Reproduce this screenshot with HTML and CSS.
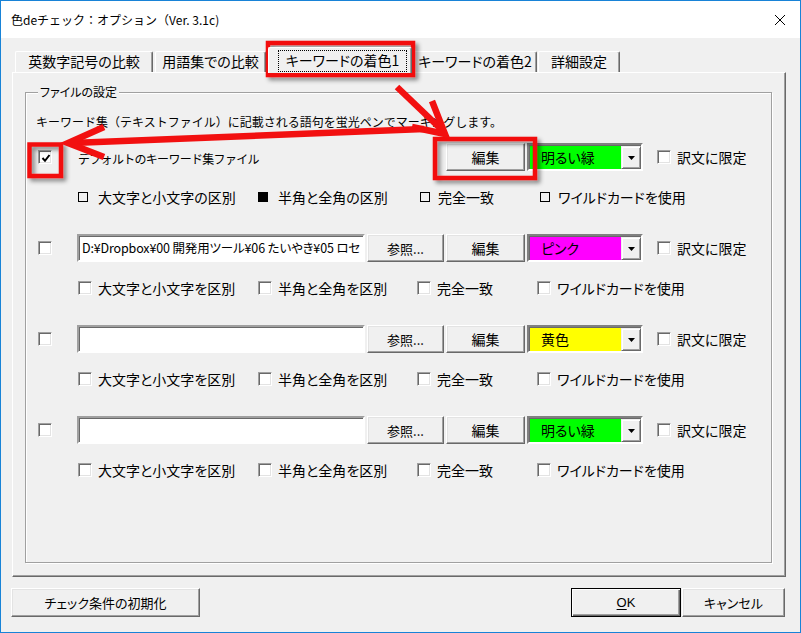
FILE: index.html
```html
<!DOCTYPE html>
<html lang="ja">
<head>
<meta charset="utf-8">
<title>色deチェック：オプション</title>
<link rel="stylesheet" href="styles.css">
</head>
<body>
<div class="window">
  <div class="titlebar">
    <span class="title">色deチェック：オプション（Ver. 3.1c)</span>
    <svg class="close" viewBox="0 0 10 10" width="10" height="10"><path d="M0 0L10 10M10 0L0 10" stroke="#000" stroke-width="1" fill="none"/></svg>
  </div>
  <div class="client">
    <div class="tabs">
      <div class="tab t1">英数字記号の比較</div>
      <div class="tab t2">用語集での比較</div>
      <div class="tab t3 active"><span class="focus">キーワードの着色1</span></div>
      <div class="tab t4">キーワードの着色2</div>
      <div class="tab t5">詳細設定</div>
    </div>
    <div class="panel">
      <div class="group">
        <span class="legend">ファイルの設定</span>
        <p class="desc">キーワード集（テキストファイル）に記載される語句を蛍光ペンでマーキングします。</p>

        <div class="entry first">
          <div class="main">
            <span class="cb"><svg viewBox="0 0 10 10" width="10" height="10"><path d="M1.5 5L4 7.8L8.5 2" stroke="#000" stroke-width="2" fill="none"/></svg></span>
            <span class="deflabel">デフォルトのキーワード集ファイル</span>
            <span class="btn edit">編集</span>
            <span class="combo"><span class="val green">明るい緑</span><span class="drop"><svg viewBox="0 0 7 4" width="7" height="4"><path d="M0 0H7L3.5 4Z" fill="#000"/></svg></span></span>
            <span class="cb limit"></span><span class="cblabel">訳文に限定</span>
          </div>
          <div class="opts opts1">
            <span class="opt"><span class="mark"></span>大文字と小文字の区別</span>
            <span class="opt"><span class="mark on"></span>半角と全角の区別</span>
            <span class="opt"><span class="mark"></span>完全一致</span>
            <span class="opt"><span class="mark"></span>ワイルドカードを使用</span>
          </div>
        </div>

        <div class="entry">
          <div class="main">
            <span class="cb"></span>
            <span class="input"><span class="path">D:¥Dropbox¥00 開発用ツール¥06 たいやき¥05 ロセ</span></span>
            <span class="btn ref">参照...</span>
            <span class="btn edit">編集</span>
            <span class="combo"><span class="val pink">ピンク</span><span class="drop"><svg viewBox="0 0 7 4" width="7" height="4"><path d="M0 0H7L3.5 4Z" fill="#000"/></svg></span></span>
            <span class="cb limit"></span><span class="cblabel">訳文に限定</span>
          </div>
          <div class="opts">
            <span class="opt"><span class="cb small"></span>大文字と小文字を区別</span>
            <span class="opt"><span class="cb small"></span>半角と全角を区別</span>
            <span class="opt"><span class="cb small"></span>完全一致</span>
            <span class="opt"><span class="cb small"></span>ワイルドカードを使用</span>
          </div>
        </div>

        <div class="entry">
          <div class="main">
            <span class="cb"></span>
            <span class="input"></span>
            <span class="btn ref">参照...</span>
            <span class="btn edit">編集</span>
            <span class="combo"><span class="val yellow">黄色</span><span class="drop"><svg viewBox="0 0 7 4" width="7" height="4"><path d="M0 0H7L3.5 4Z" fill="#000"/></svg></span></span>
            <span class="cb limit"></span><span class="cblabel">訳文に限定</span>
          </div>
          <div class="opts">
            <span class="opt"><span class="cb small"></span>大文字と小文字を区別</span>
            <span class="opt"><span class="cb small"></span>半角と全角を区別</span>
            <span class="opt"><span class="cb small"></span>完全一致</span>
            <span class="opt"><span class="cb small"></span>ワイルドカードを使用</span>
          </div>
        </div>

        <div class="entry">
          <div class="main">
            <span class="cb"></span>
            <span class="input"></span>
            <span class="btn ref">参照...</span>
            <span class="btn edit">編集</span>
            <span class="combo"><span class="val green">明るい緑</span><span class="drop"><svg viewBox="0 0 7 4" width="7" height="4"><path d="M0 0H7L3.5 4Z" fill="#000"/></svg></span></span>
            <span class="cb limit"></span><span class="cblabel">訳文に限定</span>
          </div>
          <div class="opts">
            <span class="opt"><span class="cb small"></span>大文字と小文字を区別</span>
            <span class="opt"><span class="cb small"></span>半角と全角を区別</span>
            <span class="opt"><span class="cb small"></span>完全一致</span>
            <span class="opt"><span class="cb small"></span>ワイルドカードを使用</span>
          </div>
        </div>
      </div>
    </div>
    <div class="bottom">
      <span class="btn reset">チェック条件の初期化</span>
      <span class="spacer"></span>
      <span class="btn ok"><u>O</u>K</span>
      <span class="btn cancel">キャンセル</span>
    </div>
  </div>

  <svg class="annot" width="801" height="633" viewBox="0 0 801 633">
    <defs>
      <filter id="sh" x="-20%" y="-20%" width="140%" height="140%">
        <feDropShadow dx="3" dy="3" stdDeviation="2" flood-color="#000" flood-opacity="0.45"/>
      </filter>
    </defs>
    <g fill="none" stroke="#f21010" stroke-width="4.5" filter="url(#sh)">
      <rect x="268" y="43" width="145" height="32"/>
      <rect x="29.5" y="144.5" width="31.5" height="31.5"/>
      <rect x="435" y="139" width="100" height="39"/>
    </g>
    <g fill="none" stroke="#f21010" stroke-width="6.5" stroke-linejoin="miter" stroke-linecap="butt">
      <path d="M397 87L443 131"/>
      <path d="M432 101L445 134L412 127"/>
      <path d="M424 129L72 143"/>
      <path d="M104 127L68 143L104 157"/>
    </g>
  </svg>
</div>
</body>
</html>
```

FILE: styles.css
```css
* { box-sizing: border-box; }
html, body { margin: 0; padding: 0; }
body {
  width: 801px;
  height: 633px;
  overflow: hidden;
  background: #f0f0f0;
  color: #000;
  font-family: "Noto Sans CJK JP", "Noto Sans", sans-serif;
  font-feature-settings: "palt";
}
.window {
  position: relative;
  width: 801px;
  height: 633px;
  border: 1px solid #1883d7;
  background: #f0f0f0;
}
.titlebar {
  height: 37px;
  background: #fff;
  display: flex;
  align-items: center;
  justify-content: space-between;
  padding: 0 15px 0 10px;
}
.title {
  font-size: 12px;
  line-height: 16px;
  font-feature-settings: normal;
}
.close { display: block; }

.client { padding-left: 10px; }

/* tabs */
.tabs {
  display: flex;
  align-items: flex-end;
  height: 34px;
  padding-left: 4px;
}
.tab {
  height: 21px;
  background: #f0f0f0;
  border-top: 1px solid #fff;
  border-left: 1px solid #fff;
  border-right: 1px solid #696969;
  box-shadow: inset -1px 0 #a0a0a0;
  border-radius: 2px 2px 0 0;
  font-size: 14px;
  line-height: 19px;
  text-align: center;
  white-space: nowrap;
}
.t1 { width: 138px; }
.t2 { width: 111px; margin-left: 2px; }
.t3 { width: 144px; margin-left: 2px; }
.t4 { width: 124px; margin-left: 1px; }
.t5 { width: 82px; margin-left: 1px; }
.tab.active {
  position: relative;
  z-index: 1;
  height: 26px;
  margin-bottom: -1px;
  padding: 2px 0 0 9px;
  text-align: left;
}
.focus {
  display: block;
  width: 129px;
  height: 22px;
  border: 1px dotted #000;
  line-height: 19px;
  text-align: center;
}

/* panel */
.panel {
  width: 774px;
  height: 505px;
  margin-left: 1px;
  border: 1px solid;
  border-color: #fff #696969 #696969 #fff;
  box-shadow: inset -1px -1px #a0a0a0;
  padding: 19px 13px 13px 12px;
  display: flex;
  flex-direction: column;
}
.group {
  flex: 1;
  border: 1px solid #a0a0a0;
  box-shadow: inset 1px 1px #fff, 1px 1px #fff;
  padding: 0 12px;
}
.legend {
  display: block;
  width: max-content;
  margin-top: -9px;
  padding: 0 2px;
  background: #f0f0f0;
  font-size: 12px;
  line-height: 16px;
}
.desc {
  margin: 14px 0 0 -2px;
  font-size: 12px;
  line-height: 16px;
  white-space: nowrap;
  font-feature-settings: normal;
  letter-spacing: 0;
}

/* entries */
.entry { margin-bottom: 28px; }
.entry.first { margin-top: 13px; }
.main {
  display: flex;
  align-items: center;
  height: 28px;
}
.cb {
  flex: none;
  display: inline-flex;
  align-items: center;
  justify-content: center;
  width: 14px;
  height: 14px;
  background: #fff;
  border: 1px solid;
  border-color: #a0a0a0 #fff #fff #a0a0a0;
  box-shadow: inset 1px 1px #696969, inset -1px -1px #e3e3e3;
}
.cb svg { display: block; margin: 1px 0 0 1px; }
.deflabel {
  width: 367px;
  margin-left: 25px;
  padding: 4px 0 0 1px;
  font-size: 12px;
  line-height: 16px;
  white-space: nowrap;
  font-feature-settings: normal;
  letter-spacing: -0.7px;
}
.input {
  flex: none;
  width: 288px;
  height: 28px;
  margin-left: 25px;
  background: #fff;
  border: 2px solid;
  border-color: #a0a0a0 #fff #fff #a0a0a0;
  box-shadow: inset 1px 1px #696969;
  padding: 0 2px 0 3px;
  font-size: 12.5px;
  line-height: 24px;
  white-space: nowrap;
  overflow: hidden;
}
.path { letter-spacing: -0.15px; }
.btn {
  flex: none;
  display: inline-flex;
  align-items: center;
  justify-content: center;
  height: 28px;
  background: #f0f0f0;
  border: 1px solid;
  border-color: #fff #696969 #696969 #fff;
  box-shadow: inset -1px -1px #a0a0a0, inset 1px 1px #e3e3e3;
  font-size: 14px;
  white-space: nowrap;
}
.btn.ref { width: 77px; margin-left: 2px; font-size: 13px; }
.btn.edit { width: 79px; margin-left: 2px; }
.combo {
  flex: none;
  display: flex;
  width: 116px;
  height: 28px;
  margin-left: 2px;
  border: 2px solid;
  border-color: #808080 #fff #fff #808080;
  box-shadow: inset 1px 1px #696969;
}
.val {
  flex: 1;
  padding: 0 0 2px 11px;
  font-size: 14px;
  line-height: 22px;
  margin: 1px 0 0 1px;
}
.green { background: #00ff00; }
.pink { background: #ff00ff; }
.yellow { background: #ffff00; }
.drop {
  flex: none;
  width: 20px;
  display: flex;
  align-items: center;
  justify-content: center;
  background: #f0f0f0;
  border: 1px solid;
  border-color: #f0f0f0 #696969 #696969 #f0f0f0;
  box-shadow: inset 1px 1px #fff, inset -1px -1px #a0a0a0;
  margin-top: 1px;
}
.drop svg { display: block; }
.cb.limit { margin-left: 14px; }
.cblabel {
  margin-left: 6px;
  font-size: 14px;
  white-space: nowrap;
}

/* option rows */
.opts {
  display: grid;
  grid-template-columns: 180px 159px 120px auto;
  align-items: center;
  height: 18px;
  margin-top: 17px;
  padding-left: 40px;
}
.opts1 { grid-template-columns: 180px 162px 120px auto; }
.opt {
  display: flex;
  align-items: center;
  font-size: 14px;
  line-height: 18px;
  white-space: nowrap;
}
.cb.small { margin-right: 6px; }
.mark {
  flex: none;
  width: 10px;
  height: 10px;
  border: 1px solid #000;
  margin-right: 10px;
}
.mark.on { background: #000; }
.opts1 .opt:nth-child(3) .mark,
.opts1 .opt:nth-child(4) .mark { margin-right: 8px; }

/* bottom buttons */
.bottom {
  display: flex;
  width: 774px;
  height: 29px;
  margin-top: 11px;
}
.bottom .btn { height: 29px; font-size: 13px; }
.spacer { flex: 1; }
.btn.reset { width: 189px; }
.btn.ok {
  width: 110px;
  border: 1px solid #000;
  box-shadow: inset 1px 1px #fff, inset -1px -1px #696969, inset -2px -2px #a0a0a0;
  font-family: "Liberation Sans", sans-serif;
  font-size: 13px;
}
.btn.ok u { text-decoration-thickness: 1px; text-underline-offset: 2px; }
.btn.cancel { width: 103px; margin-left: 1px; }

/* annotation overlay */
.annot {
  position: absolute;
  left: -1px;
  top: -1px;
  pointer-events: none;
}
```
